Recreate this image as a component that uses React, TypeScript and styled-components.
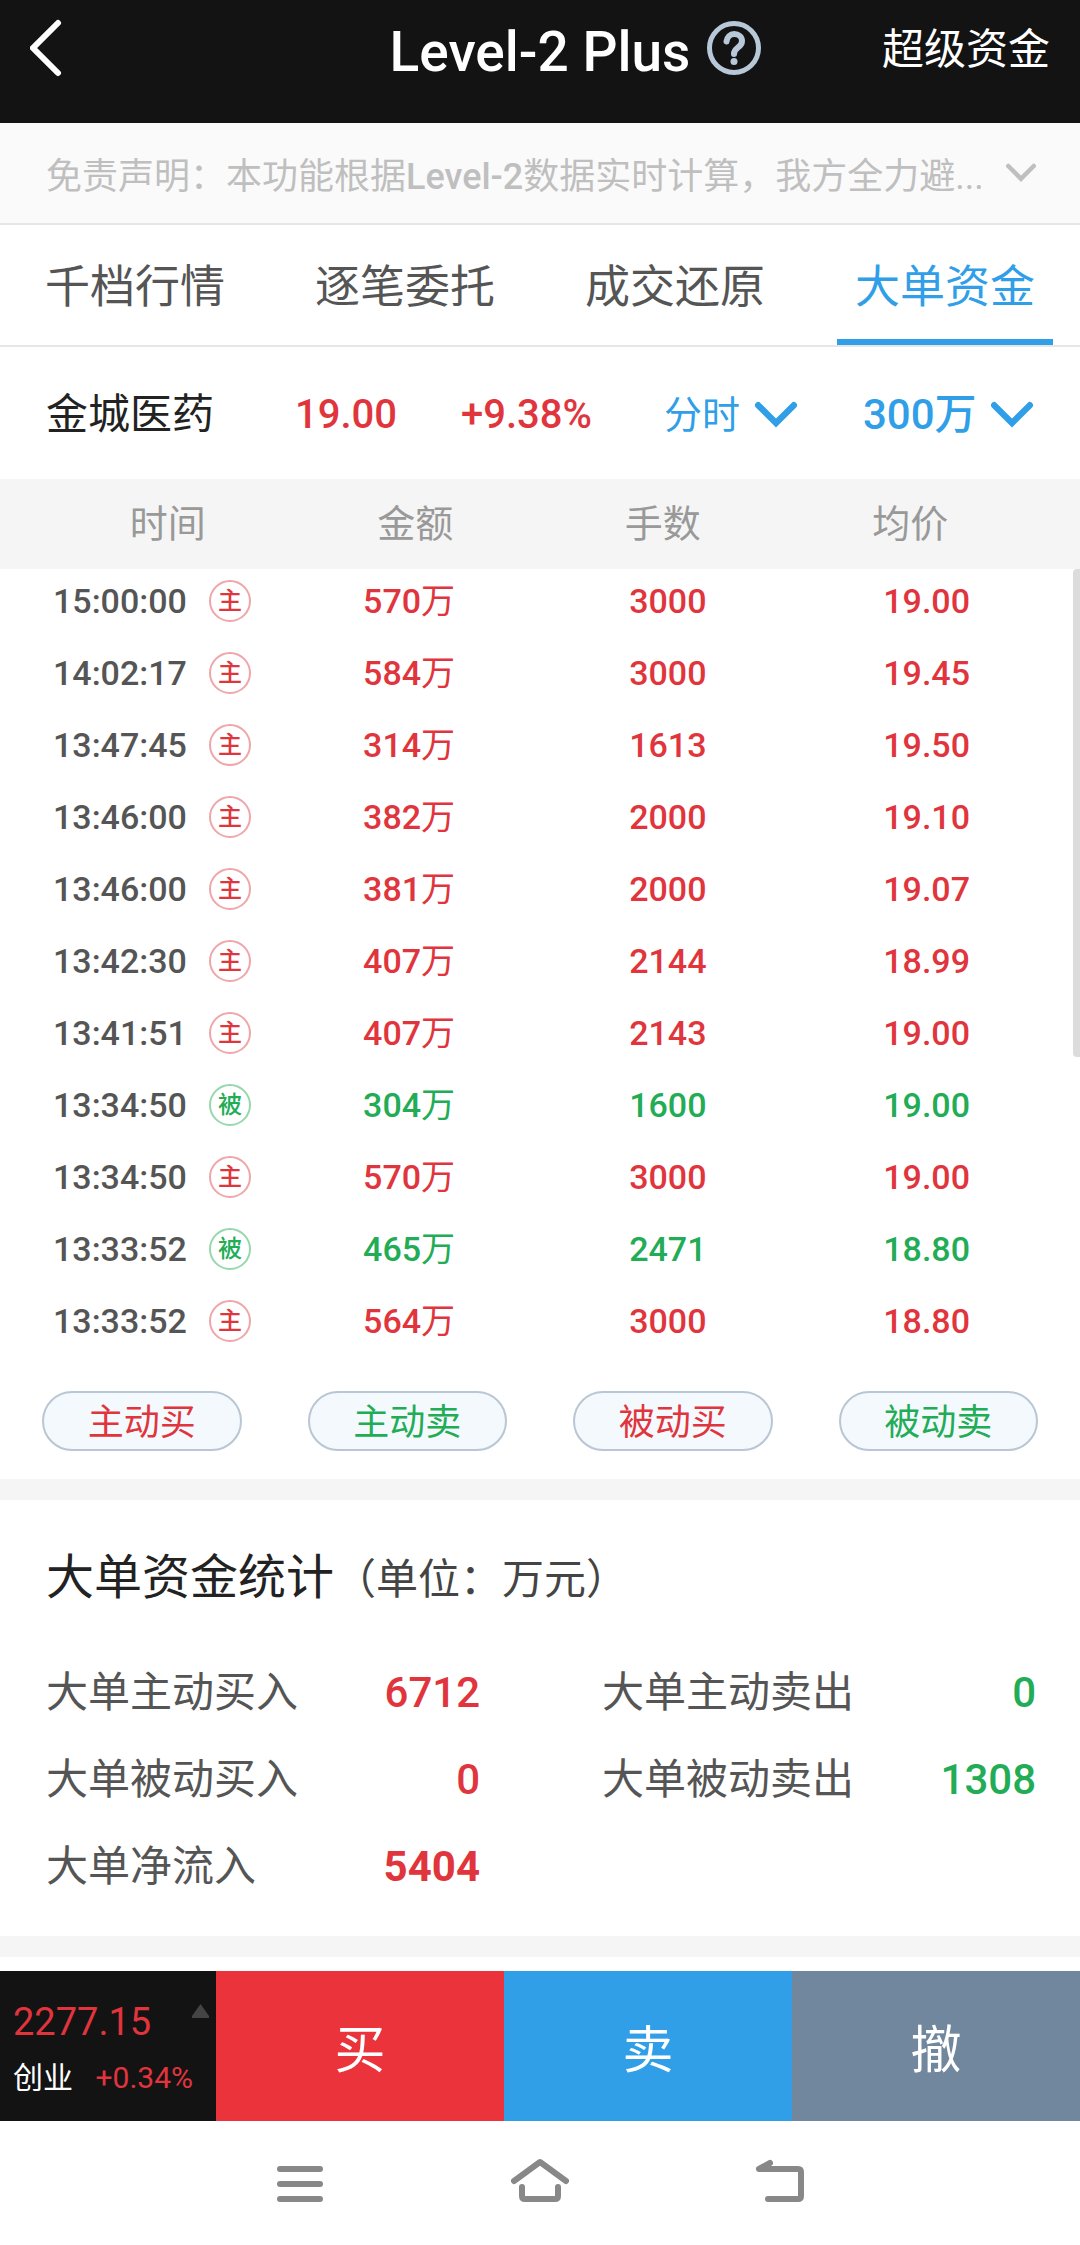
import React from "react";
import styled, { createGlobalStyle } from "styled-components";

const RED = "#e0353d";
const GREEN = "#22ac56";
const BLUE = "#309fe8";

const GlobalStyle = createGlobalStyle`
  * { box-sizing: border-box; }
  body {
    margin: 0;
    background: #fff;
    color: #222;
    font-family: Roboto, "Noto Sans CJK SC", sans-serif;
  }
  button, select {
    margin: 0;
    padding: 0;
    border: 0;
    background: none;
    color: inherit;
    font: inherit;
    cursor: pointer;
  }
  a { color: inherit; text-decoration: none; }
  h1, h2, p, dl, dd { margin: 0; font-weight: 400; }
`;

type Tone = "buy" | "sell";
const toneColor = (tone: Tone) => (tone === "buy" ? RED : GREEN);

const Header = styled.header`
  display: grid;
  grid-template-columns: 1fr auto 1fr;
  align-items: start;
  height: 123px;
  padding: 16px 30px 0;
  background: #131313;
  color: #fff;
`;

const BackButton = styled.button`
  display: flex;
  justify-self: start;
  height: 64px;
  align-items: center;
`;

const TitleGroup = styled.div`
  display: flex;
  align-items: center;
  gap: 16px;
  height: 64px;
  padding-left: 72px;
`;

const Title = styled.h1`
  font-size: 55px;
  font-weight: 500;
  line-height: 72px;
  padding-top: 8px;
`;

const HelpButton = styled.button`
  display: flex;
`;

const HeaderLink = styled.a`
  justify-self: end;
  font-size: 42px;
  line-height: 68px;
`;

const Disclaimer = styled.button`
  display: flex;
  align-items: center;
  gap: 20px;
  width: 100%;
  height: 102px;
  padding: 0 44px 0 46px;
  border-bottom: 2px solid #e6e6e6;
  background: #fafafa;
  color: #bfbfbf;
  font-size: 36px;
  text-align: left;
`;

const DisclaimerText = styled.span`
  flex: 1;
  min-width: 0;
  overflow: hidden;
  text-overflow: ellipsis;
  white-space: nowrap;
`;

const Latin = styled.span`
  font-weight: 500;
`;

const Tabs = styled.nav`
  display: grid;
  grid-template-columns: repeat(4, 1fr);
  border-bottom: 2px solid #e6e6e6;
`;

const Tab = styled.a<{ $active?: boolean }>`
  display: flex;
  flex-direction: column;
  align-items: center;
  height: 120px;
  padding-top: 6px;
  color: ${(p) => (p.$active ? BLUE : "#555")};
  font-size: 45px;
  line-height: 114px;

  &::after {
    content: "";
    width: 80%;
    height: 6px;
    margin-top: -6px;
    background: ${(p) => (p.$active ? BLUE : "transparent")};
  }
`;

const Quote = styled.section`
  display: grid;
  grid-template-columns: 249fr 166fr 203fr 199fr 173fr;
  align-items: center;
  height: 132px;
  padding: 4px 44px 0 46px;
  line-height: 60px;
  white-space: nowrap;
`;

const StockName = styled.span`
  font-size: 42px;
`;

const Price = styled.span`
  color: ${RED};
  font-size: 40px;
  font-weight: 500;
`;

const Picker = styled.label<{ $size: number }>`
  display: flex;
  align-items: center;
  gap: 14px;
  color: ${BLUE};
  font-size: ${(p) => p.$size}px;
  font-weight: ${(p) => (p.$size > 40 ? 500 : 400)};

  select {
    appearance: none;
    outline: 0;
  }
`;

const ListPanel = styled.section`
  position: relative;
`;

const ScrollThumb = styled.div`
  position: absolute;
  top: 90px;
  right: 0;
  width: 7px;
  height: 488px;
  border-radius: 4px 0 0 4px;
  background: #dcdcdc;
`;

const Table = styled.table`
  display: block;
  width: 100%;

  thead, tbody { display: block; }
  th, td { padding: 0; text-align: center; }
`;

const HeadRow = styled.tr`
  display: grid;
  grid-template-columns: repeat(4, 1fr);
  padding: 0 46px 0 44px;
  background: #f5f5f5;
  color: #999;
  font-size: 38px;
  line-height: 90px;

  th { font-weight: 400; }
`;

const TradeRow = styled.tr<{ $tone: Tone }>`
  display: grid;
  grid-template-columns: 280fr 259fr 259fr 259fr;
  height: 72px;
  padding-right: 24px;
  color: ${(p) => toneColor(p.$tone)};
  font-size: 34px;
  font-weight: 500;
  line-height: 64px;
`;

const TimeCell = styled.td`
  && {
    display: flex;
    align-items: center;
    gap: 22px;
    height: 64px;
    padding-left: 53px;
  }
`;

const Time = styled.time`
  color: #555;
`;

const AmountUnit = styled.span`
  font-weight: 400;
`;

const Badge = styled.span<{ $tone: Tone }>`
  display: flex;
  align-items: center;
  justify-content: center;
  width: 42px;
  height: 42px;
  border: 2px solid ${(p) => (p.$tone === "buy" ? "#f0a5a9" : "#95d8ad")};
  border-radius: 50%;
  font-size: 24px;
  line-height: 24px;
`;

const Filters = styled.div`
  display: grid;
  grid-template-columns: repeat(4, 1fr);
  gap: 66px;
  padding: 30px 42px 28px;
`;

const Pill = styled.button<{ $tone: Tone }>`
  height: 60px;
  padding-top: 4px;
  border: 2px solid #b9c6d3;
  border-radius: 30px;
  background: #f4f9fe;
  color: ${(p) => toneColor(p.$tone)};
  font-size: 36px;
  line-height: 52px;
`;

const Band = styled.div`
  height: 21px;
  background: #f5f5f5;
`;

const Stats = styled.section`
  padding: 42px 44px 26px 46px;
`;

const StatsTitle = styled.h2`
  font-size: 48px;
  line-height: 72px;
`;

const Unit = styled.span`
  color: #444;
  font-size: 42px;
`;

const StatsGrid = styled.dl`
  display: grid;
  grid-template-columns: 434fr 434fr;
  column-gap: 122px;
  padding-top: 33px;
`;

const Stat = styled.div<{ $tone: Tone; $strong?: boolean }>`
  display: flex;
  justify-content: space-between;
  font-size: 42px;
  line-height: 87px;

  dt { color: #555; }
  dd {
    color: ${(p) => toneColor(p.$tone)};
    font-weight: ${(p) => (p.$strong ? 700 : 500)};
  }
`;

const TradeBar = styled.footer`
  display: grid;
  grid-template-columns: 216fr 288fr 288fr 288fr;
  height: 150px;
  margin-top: 14px;
  background: #131313;
  color: #fff;
`;

const IndexBox = styled.button`
  display: flex;
  flex-direction: column;
  justify-content: center;
  gap: 12px;
  padding: 8px 7px 0 13px;
  text-align: left;
`;

const IndexLine = styled.span`
  display: flex;
  align-items: center;
  justify-content: space-between;
  line-height: 44px;

  svg {
    align-self: flex-start;
    margin-top: 4px;
  }
`;

const IndexValue = styled.span`
  color: ${RED};
  font-size: 38px;
`;

const IndexName = styled.span`
  font-size: 30px;
`;

const IndexChange = styled.span`
  color: ${RED};
  font-size: 30px;
  padding-right: 16px;
`;

const TradeButton = styled.button<{ $bg: string }>`
  background: ${(p) => p.$bg};
  font-size: 51px;
`;

const SystemNav = styled.nav`
  display: flex;
  justify-content: center;
  gap: 180px;
  height: 126px;
  padding-top: 32px;
`;

const NavButton = styled.button`
  display: flex;
  width: 60px;
  height: 60px;
`;

const Chevron = ({ width, color }: { width: number; color: string }) => (
  <svg
    width={width}
    height={width * 0.65}
    viewBox="0 0 40 26"
    fill="none"
    stroke={color}
    strokeWidth="6"
    strokeLinecap="round"
  >
    <path d="M3 4 20 21 37 4" />
  </svg>
);

const tabs = ["千档行情", "逐笔委托", "成交还原", "大单资金"];

const trades: [string, Tone, string, string, string][] = [
  ["15:00:00", "buy", "570", "3000", "19.00"],
  ["14:02:17", "buy", "584", "3000", "19.45"],
  ["13:47:45", "buy", "314", "1613", "19.50"],
  ["13:46:00", "buy", "382", "2000", "19.10"],
  ["13:46:00", "buy", "381", "2000", "19.07"],
  ["13:42:30", "buy", "407", "2144", "18.99"],
  ["13:41:51", "buy", "407", "2143", "19.00"],
  ["13:34:50", "sell", "304", "1600", "19.00"],
  ["13:34:50", "buy", "570", "3000", "19.00"],
  ["13:33:52", "sell", "465", "2471", "18.80"],
  ["13:33:52", "buy", "564", "3000", "18.80"],
];

const filters: [string, Tone][] = [
  ["主动买", "buy"],
  ["主动卖", "sell"],
  ["被动买", "buy"],
  ["被动卖", "sell"],
];

const stats: { label: string; value: string; tone: Tone; strong?: boolean }[] = [
  { label: "大单主动买入", value: "6712", tone: "buy" },
  { label: "大单主动卖出", value: "0", tone: "sell" },
  { label: "大单被动买入", value: "0", tone: "buy" },
  { label: "大单被动卖出", value: "1308", tone: "sell" },
  { label: "大单净流入", value: "5404", tone: "buy", strong: true },
];

export default function App() {
  return (
    <>
      <GlobalStyle />
      <Header>
        <BackButton aria-label="返回">
          <svg width="34" height="58" viewBox="0 0 34 58" fill="none" stroke="#fff" strokeWidth="6" strokeLinecap="round">
            <path d="M28 4 3 29 28 54" />
          </svg>
        </BackButton>
        <TitleGroup>
          <Title>Level-2 Plus</Title>
          <HelpButton aria-label="帮助">
            <svg width="56" height="56" viewBox="0 0 56 56" fill="none" stroke="#b8c8d8" strokeWidth="5">
              <circle cx="28" cy="28" r="24.5" />
              <path
                d="M20.500 21.500c.6-4.500 3.600-7.500 7.700-7.500 4.400 0 7.800 2.900 7.800 7 0 3-1.600 4.800-4.200 6.700-2.600 1.900-3.800 3.300-3.800 6.300"
                strokeWidth="6"
                strokeLinecap="round"
              />
              <circle cx="28" cy="41.500" r="3.500" fill="#b8c8d8" stroke="none" />
            </svg>
          </HelpButton>
        </TitleGroup>
        <HeaderLink href="#super">超级资金</HeaderLink>
      </Header>

      <Disclaimer>
        <DisclaimerText>
          免责声明：本功能根据<Latin>Level-2</Latin>数据实时计算，我方全力避...
        </DisclaimerText>
        <Chevron width={30} color="#bfbfbf" />
      </Disclaimer>

      <Tabs>
        {tabs.map((name, i) => (
          <Tab key={name} href={`#tab-${i}`} $active={i === 3}>
            {name}
          </Tab>
        ))}
      </Tabs>

      <Quote>
        <StockName>金城医药</StockName>
        <Price>19.00</Price>
        <Price>+9.38%</Price>
        <Picker $size={38}>
          <select aria-label="周期">
            <option>分时</option>
          </select>
          <Chevron width={42} color={BLUE} />
        </Picker>
        <Picker $size={42}>
          <select aria-label="金额门槛">
            <option>300万</option>
          </select>
          <Chevron width={42} color={BLUE} />
        </Picker>
      </Quote>

      <ListPanel>
        <Table>
          <thead>
            <HeadRow>
              <th>时间</th>
              <th>金额</th>
              <th>手数</th>
              <th>均价</th>
            </HeadRow>
          </thead>
          <tbody>
            {trades.map(([time, tone, amount, lots, price], i) => (
              <TradeRow key={i} $tone={tone}>
                <TimeCell>
                  <Time>{time}</Time>
                  <Badge $tone={tone}>{tone === "buy" ? "主" : "被"}</Badge>
                </TimeCell>
                <td>
                  {amount}
                  <AmountUnit>万</AmountUnit>
                </td>
                <td>{lots}</td>
                <td>{price}</td>
              </TradeRow>
            ))}
          </tbody>
        </Table>
        <ScrollThumb />
      </ListPanel>

      <Filters>
        {filters.map(([name, tone]) => (
          <Pill key={name} $tone={tone}>
            {name}
          </Pill>
        ))}
      </Filters>

      <Band />

      <Stats>
        <StatsTitle>
          大单资金统计<Unit>（单位：万元）</Unit>
        </StatsTitle>
        <StatsGrid>
          {stats.map((s) => (
            <Stat key={s.label} $tone={s.tone} $strong={s.strong}>
              <dt>{s.label}</dt>
              <dd>{s.value}</dd>
            </Stat>
          ))}
        </StatsGrid>
      </Stats>

      <Band />

      <TradeBar>
        <IndexBox>
          <IndexLine>
            <IndexValue>2277.15</IndexValue>
            <svg width="17" height="14" viewBox="0 0 17 14" fill="#444">
              <path d="M8.500 0 17 12v2H0v-2z" />
            </svg>
          </IndexLine>
          <IndexLine>
            <IndexName>创业</IndexName>
            <IndexChange>+0.34%</IndexChange>
          </IndexLine>
        </IndexBox>
        <TradeButton $bg="#eb333b">买</TradeButton>
        <TradeButton $bg="#309fe8">卖</TradeButton>
        <TradeButton $bg="#71879d">撤</TradeButton>
      </TradeBar>

      <SystemNav>
        <NavButton aria-label="菜单">
          <svg width="60" height="60" viewBox="0 0 60 60" stroke="#888" strokeWidth="6" strokeLinecap="round">
            <path d="M10 16h40M10 31h40M10 46h40" />
          </svg>
        </NavButton>
        <NavButton aria-label="主页">
          <svg width="60" height="60" viewBox="0 0 60 60" fill="none" stroke="#888" strokeWidth="6" strokeLinecap="round" strokeLinejoin="round">
            <path d="M4 28 30 9 56 28" />
            <path d="M12 34v9q0 3 3 3h30q3 0 3-3v-9" />
          </svg>
        </NavButton>
        <NavButton aria-label="后退">
          <svg width="60" height="60" viewBox="0 0 60 60" fill="none" stroke="#888" strokeWidth="6" strokeLinecap="round" strokeLinejoin="round">
            <path d="M20 10 9 16h39q3 0 3 3v24q0 3-3 3H18" />
          </svg>
        </NavButton>
      </SystemNav>
    </>
  );
}
